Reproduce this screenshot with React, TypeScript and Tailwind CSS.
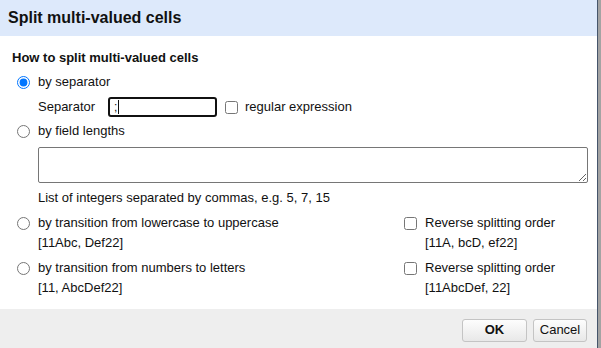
import React from 'react';

const font = { fontFamily: '"Liberation Sans", Arial, sans-serif' };

function Radio({ checked }: { checked?: boolean }) {
  return (
    <input
      type="radio"
      name="mode"
      defaultChecked={checked}
      className="m-0 h-[13px] w-[13px] shrink-0"
    />
  );
}

function Check() {
  return <input type="checkbox" className="m-0 h-[13px] w-[13px] shrink-0" />;
}

export default function App() {
  return (
    <div className="flex h-[348px] w-[601px] bg-[#a3a3a3] text-[13px] text-[#111]" style={font}>
      {/* Dialog */}
      <div className="flex h-full w-[598px] flex-col border-r border-[#45556b] bg-white">
        {/* Header */}
        <div className="flex h-[36px] shrink-0 items-center bg-[#dde9fb] pl-[8px] text-[16px] font-bold">
          Split multi-valued cells
        </div>

        {/* Body */}
        <div className="flex flex-1 flex-col pl-[12px] pt-[12px]">
          <div className="h-[20px] font-bold leading-[20px]">How to split multi-valued cells</div>

          <label className="mt-[4px] flex h-[20px] items-center pl-[5px]">
            <Radio checked />
            <span className="ml-[8px]">by separator</span>
          </label>

          <div className="mt-[5px] flex h-[20px] items-center pl-[26px]">
            <span className="w-[70px]">Separator</span>
            <div className="flex h-[20px] w-[109px] items-center rounded-[3px] border-2 border-[#111] pl-[4px] text-[12px]">
              <span>;</span>
              <span className="ml-[1px] h-[14px] w-px bg-[#111]" />
            </div>
            <label className="ml-[8px] flex items-center">
              <Check />
              <span className="ml-[7px]">regular expression</span>
            </label>
          </div>

          <label className="mt-[4px] flex h-[20px] items-center pl-[5px]">
            <Radio />
            <span className="ml-[8px]">by field lengths</span>
          </label>

          <textarea className="ml-[26px] mt-[6px] h-[36px] w-[550px] rounded-[2px] border border-[#767676] outline-none" />

          <div className="mt-[5px] h-[20px] pl-[26px] leading-[20px]">
            List of integers separated by commas, e.g. 5, 7, 15
          </div>

          <div className="mt-[5px] grid grid-cols-[392px_1fr]">
            <div>
              <label className="flex h-[20px] items-center pl-[5px]">
                <Radio />
                <span className="ml-[8px]">by transition from lowercase to uppercase</span>
              </label>
              <div className="h-[20px] pl-[26px] leading-[20px]">[11Abc, Def22]</div>
            </div>
            <div>
              <label className="flex h-[20px] items-center">
                <Check />
                <span className="ml-[8px]">Reverse splitting order</span>
              </label>
              <div className="h-[20px] pl-[21px] leading-[20px]">[11A, bcD, ef22]</div>
            </div>
          </div>

          <div className="mt-[5px] grid grid-cols-[392px_1fr]">
            <div>
              <label className="flex h-[20px] items-center pl-[5px]">
                <Radio />
                <span className="ml-[8px]">by transition from numbers to letters</span>
              </label>
              <div className="h-[20px] pl-[26px] leading-[20px]">[11, AbcDef22]</div>
            </div>
            <div>
              <label className="flex h-[20px] items-center">
                <Check />
                <span className="ml-[8px]">Reverse splitting order</span>
              </label>
              <div className="h-[20px] pl-[21px] leading-[20px]">[11AbcDef, 22]</div>
            </div>
          </div>
        </div>

        {/* Footer */}
        <div className="flex h-[39px] shrink-0 items-center justify-end gap-[6px] bg-[#eeeeee] pr-[10px] pt-[3px]">
          <button className="h-[23px] w-[65px] rounded-[3px] border border-[#c4c4c4] bg-gradient-to-b from-[#fdfdfd] to-[#e8e8e8] font-bold">
            OK
          </button>
          <button className="h-[23px] w-[54px] rounded-[3px] border border-[#c4c4c4] bg-gradient-to-b from-[#fdfdfd] to-[#e8e8e8]">
            Cancel
          </button>
        </div>
      </div>
    </div>
  );
}
